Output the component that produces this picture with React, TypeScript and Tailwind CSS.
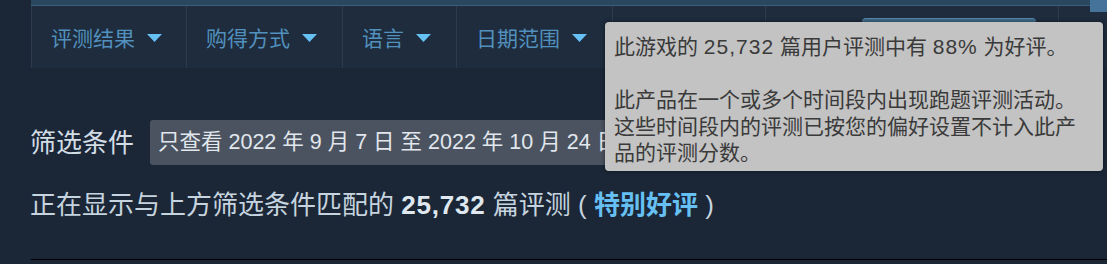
import React from 'react';

const font = { fontFamily: '"Liberation Sans", "Noto Sans CJK SC", sans-serif' };

const Caret = () => (
  <svg width="15" height="8" viewBox="0 0 15 8" className="shrink-0">
    <path d="M0 0h15L7.5 8z" fill="#66c0f4" />
  </svg>
);

const tabs = [
  { label: '评测结果', w: 'w-[155px]' },
  { label: '购得方式', w: 'w-[156px]' },
  { label: '语言', w: 'w-[114px]' },
  { label: '日期范围', w: 'w-[156px]' },
];

export default function App() {
  return (
    <div className="relative h-[264px] w-[1107px] overflow-hidden bg-[#1b2737]" style={font}>
      {/* filter bar */}
      <div className="ml-[31px]">
        <div className="relative h-[6px] border-b border-[#3a5f7d] bg-[#2a4760]">
          <div className="absolute right-0 top-0 h-[12px] w-[17px] bg-[#46739a]" />
        </div>
        <div className="flex h-[62px] bg-[#1e2c3d]">
          {tabs.map((t) => (
            <div key={t.label}
              className={`flex ${t.w} shrink-0 items-center gap-[12px] whitespace-nowrap border-l border-[#2c3b4d] pl-[19px] pt-[2px] text-[21px] text-[#5290bd]`}>
              <span className="leading-none">{t.label}</span>
              <Caret />
            </div>
          ))}
          <div className="w-[153px] shrink-0 border-l border-[#2c3b4d]" />
          <div className="flex w-[293px] shrink-0 border-l border-[#2c3b4d] pt-[12px] pl-[96px]">
            <div className="h-full w-[174px] rounded-t-[4px] border-t border-[#5a87a8] bg-[#3d6a8b]" />
          </div>
          <div className="flex-1 border-l border-[#2c3b4d]" />
        </div>
      </div>

      {/* filters */}
      <div className="px-[30px] pt-[52px]">
        <div className="flex h-[45px] items-center gap-[16px]">
          <span className="whitespace-nowrap text-[26px] leading-none text-[#d3dde5]">筛选条件</span>
          <div className="flex h-[45px] w-[520px] shrink-0 items-center rounded-[3px] bg-[#4b5361] px-[8px] text-[21.5px] whitespace-nowrap text-[#e1e7ec]">
            只查看 2022 年 9 月 7 日 至 2022 年 10 月 24 日
          </div>
        </div>
        <div className="mt-[27px] whitespace-nowrap text-[26px] leading-none text-[#c6d4df]">
          正在显示与上方筛选条件匹配的 <span className="font-bold tracking-[0.8px] text-[#dfe8ef]">25,732</span> 篇评测 ( <span className="font-bold text-[#66c0f4]">特别好评</span> )
        </div>
      </div>

      <div className="absolute bottom-[4px] left-[31px] right-0 h-px bg-black" />

      {/* tooltip */}
      <div className="absolute left-[605px] top-[22px] w-[498px] rounded-[4px] bg-[#c3c3c3] pb-[4px] pl-[9px] pr-[20px] pt-[12px] text-[21px] leading-[26.5px] text-[#3a3a3a] shadow-[0_0_4px_rgba(0,0,0,0.5)]">
        <p>此游戏的 <span className="tracking-[1px]">25,732</span> 篇用户评测中有 <span className="tracking-[1px]">88%</span> 为好评。</p>
        <p className="mt-[26.5px]">此产品在一个或多个时间段内出现跑题评测活动。<br />这些时间段内的评测已按您的偏好设置不计入此产品的评测分数。</p>
      </div>
    </div>
  );
}
